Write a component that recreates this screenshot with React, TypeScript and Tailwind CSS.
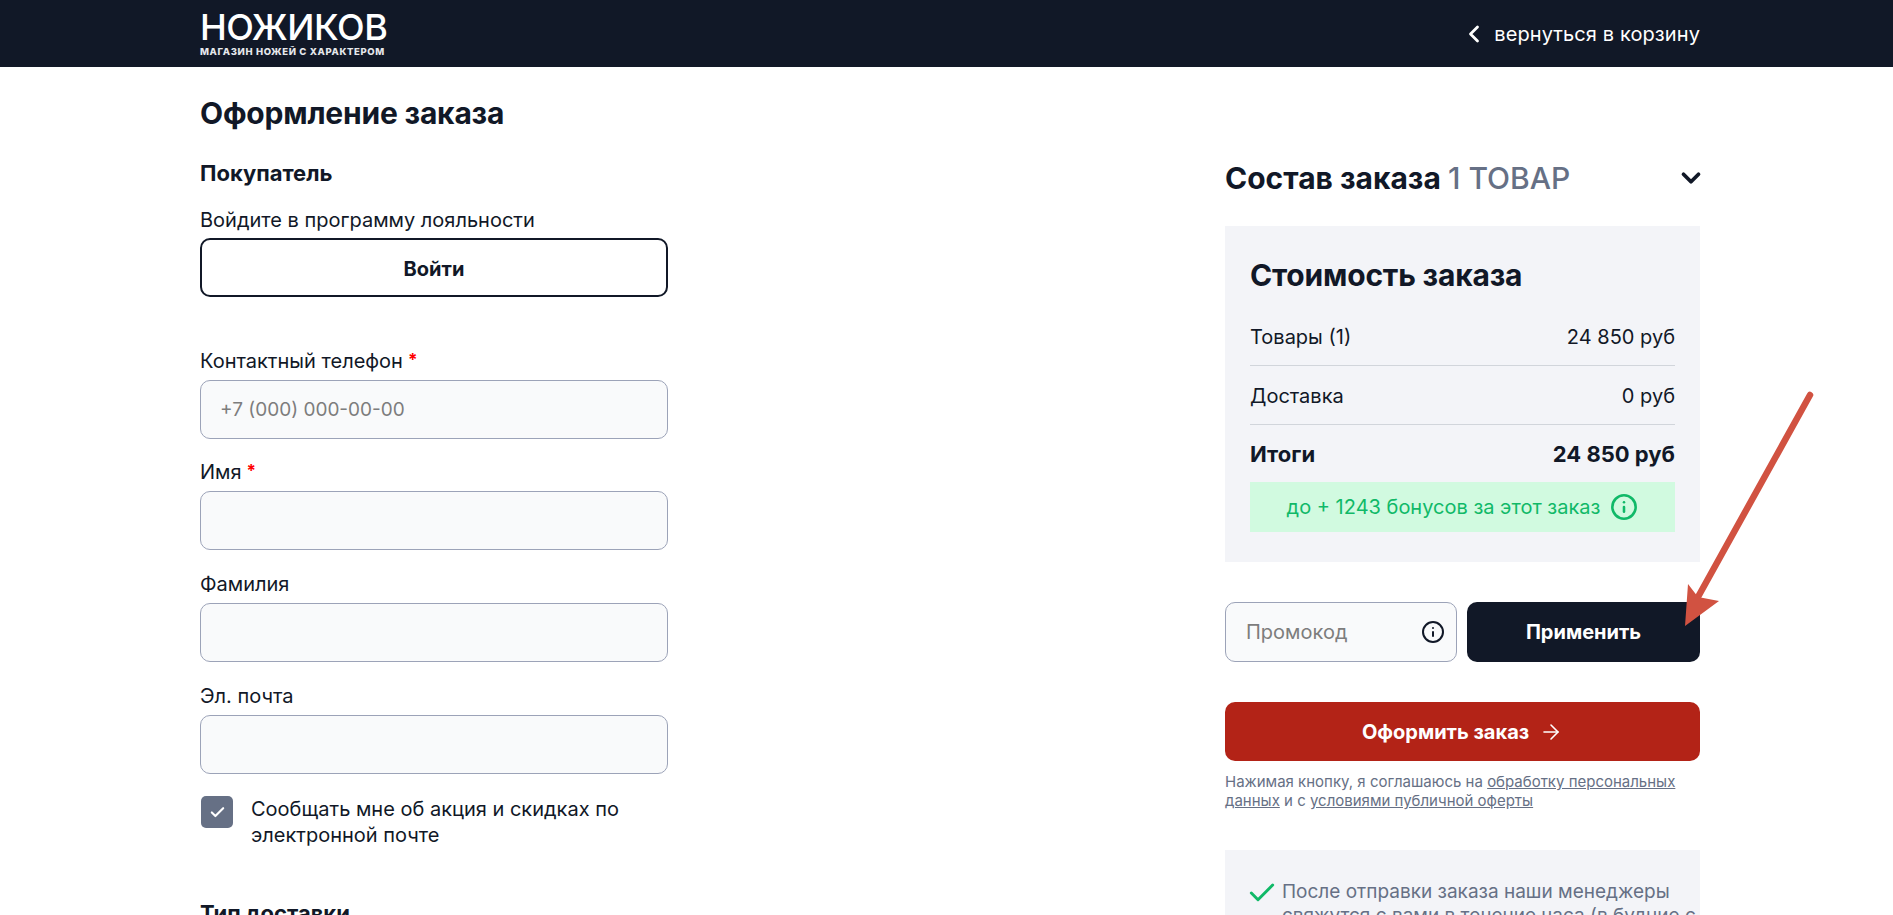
import React from 'react';
import { ChevronDown, ChevronLeft, ArrowRight, Check, Info } from 'lucide-react';

const Field: React.FC<{ label: string; required?: boolean; placeholder?: string; className?: string }> = ({
  label,
  required,
  placeholder,
  className,
}) => (
  <div className={className}>
    <label className="flex h-[22px] items-center text-[20px] leading-[22px] text-[#111827]">
      {label}
      {required ? <span className="ml-[5px] -mt-[3px] text-[17px] font-bold text-[#ff0000]">*</span> : null}
    </label>
    <input
      type="text"
      placeholder={placeholder}
      className="mt-[8px] block h-[59px] w-full rounded-[10px] border border-[#9ca3b8] bg-[#f9fafb] px-[19px] text-[19px] outline-none placeholder:text-[#7d7d7d]"
    />
  </div>
);

const Row: React.FC<{ label: string; value: string }> = ({ label, value }) => (
  <div className="flex h-[59px] items-center justify-between border-b border-[#d1d5db] pt-[2px] text-[20px] text-[#111827]">
    <span>{label}</span>
    <span>{value}</span>
  </div>
);

export default function App() {
  return (
    <div className="relative h-[915px] overflow-hidden bg-white font-['Inter',sans-serif] text-[#111827]">
      <header className="h-[67px] bg-[#111827]">
        <div className="ml-[200px] flex h-full w-[1500px] items-center justify-between">
          <a className="block text-white">
            <div className="text-[36px] font-medium leading-[34px] tracking-[-0.012em]">НОЖИКОВ</div>
            <div className="mt-[2px] text-[9.5px] font-extrabold leading-[12px] tracking-[0.065em] text-[#e5e7eb]">
              МАГАЗИН НОЖЕЙ С ХАРАКТЕРОМ
            </div>
          </a>
          <a className="flex items-center gap-[6px] text-[20px] tracking-[0.1px] text-white">
            <ChevronLeft size={28} strokeWidth={2.4} />
            <span>вернуться в корзину</span>
          </a>
        </div>
      </header>

      <main className="ml-[200px] flex w-[1500px] items-start justify-between">
        <section className="w-[468px]">
          <h1 className="mt-[27px] text-[30px] font-bold leading-[38px] tracking-[-0.2px]">Оформление заказа</h1>
          <h2 className="mt-[26px] text-[22px] font-bold leading-[30px]">Покупатель</h2>
          <p className="mt-[20px] text-[20px] leading-[24px]">Войдите в программу лояльности</p>
          <button className="mt-[6px] block h-[59px] w-full rounded-[10px] border-2 border-[#111827] bg-white pt-[2px] text-[20px] font-bold">
            Войти
          </button>

          <Field className="mt-[53px]" label="Контактный телефон" required placeholder="+7 (000) 000-00-00" />
          <Field className="mt-[22px]" label="Имя" required />
          <Field className="mt-[23px]" label="Фамилия" />
          <Field className="mt-[23px]" label="Эл. почта" />

          <label className="mt-[22px] flex items-start gap-[18px]">
            <span className="ml-[1px] flex h-[32px] w-[32px] shrink-0 items-center justify-center rounded-[5px] bg-[#667085] text-white">
              <Check size={17} strokeWidth={3} />
            </span>
            <span className="text-[20px] leading-[26px]">
              Сообщать мне об акция и скидках по электронной почте
            </span>
          </label>

          <h2 className="mt-[50px] text-[22px] font-bold leading-[30px]">Тип доставки</h2>
        </section>

        <section className="w-[475px]">
          <div className="mt-[91px] flex h-[40px] items-center justify-between">
            <h2 className="text-[30px] font-bold leading-[40px]">
              Состав заказа <span className="font-medium text-[#667085]">1 ТОВАР</span>
            </h2>
            <ChevronDown size={30} strokeWidth={3} className="-mr-[6px]" />
          </div>

          <div className="mt-[28px] h-[336px] bg-[#f3f4f8] px-[25px] pt-[30px]">
            <h3 className="text-[30px] font-bold leading-[38px] tracking-[-0.2px]">Стоимость заказа</h3>
            <div className="mt-[13px]">
              <Row label="Товары (1)" value="24 850 руб" />
              <Row label="Доставка" value="0 руб" />
            </div>
            <div className="flex h-[57px] items-center justify-between pt-[2px] text-[22px] font-bold">
              <span>Итоги</span>
              <span>24 850 руб</span>
            </div>
            <div className="flex h-[50px] items-center justify-center gap-[10px] bg-[#d1fae0] text-[20px] text-[#10b968]">
              <span>до + 1243 бонусов за этот заказ</span>
              <Info size={28} strokeWidth={2.2} />
            </div>
          </div>

          <div className="mt-[40px] flex gap-[10px]">
            <div className="flex h-[60px] w-[232px] items-center justify-between rounded-[10px] border border-[#9ca3b8] bg-[#f9fafb] pl-[20px] pr-[11px]">
              <input
                type="text"
                placeholder="Промокод"
                className="w-[150px] bg-transparent text-[20px] outline-none placeholder:text-[#7d7d7d]"
              />
              <Info size={24} strokeWidth={2} className="text-[#111827]" />
            </div>
            <button className="h-[60px] flex-1 rounded-[10px] bg-[#111827] text-[20px] font-bold text-white">
              Применить
            </button>
          </div>

          <button className="mt-[40px] flex h-[59px] w-full items-center justify-center gap-[10px] rounded-[10px] bg-[#b32317] text-[20px] font-bold text-white">
            Оформить заказ
            <ArrowRight size={24} strokeWidth={1.6} />
          </button>

          <p className="mt-[11px] text-[15px] leading-[19px] text-[#667085]">
            Нажимая кнопку, я соглашаюсь на <a className="underline">обработку персональных данных</a> и с{' '}
            <a className="underline">условиями публичной оферты</a>
          </p>

          <div className="mt-[40px] flex gap-[4px] bg-[#f3f4f8] pl-[25px] pt-[30px] pb-[30px]">
            <Check size={32} strokeWidth={2.2} className="-mt-[3px] -ml-[4px] shrink-0 text-[#10b968]" />
            <p className="text-[19px] leading-[24px] text-[#667085]">
              После отправки заказа наши менеджеры свяжутся с вами в течение часа (в будние с
            </p>
          </div>
        </section>
      </main>

      {/* annotation arrow drawn over the screenshot */}
      <svg className="pointer-events-none absolute left-0 top-0" width="1893" height="915" fill="none">
        <path d="M1810 395 L1698 597" stroke="#d15241" strokeWidth="6.5" strokeLinecap="round" />
        <path d="M1685 626 L1688 584 L1698 597 L1719 601 Z" fill="#d15241" />
      </svg>
    </div>
  );
}
